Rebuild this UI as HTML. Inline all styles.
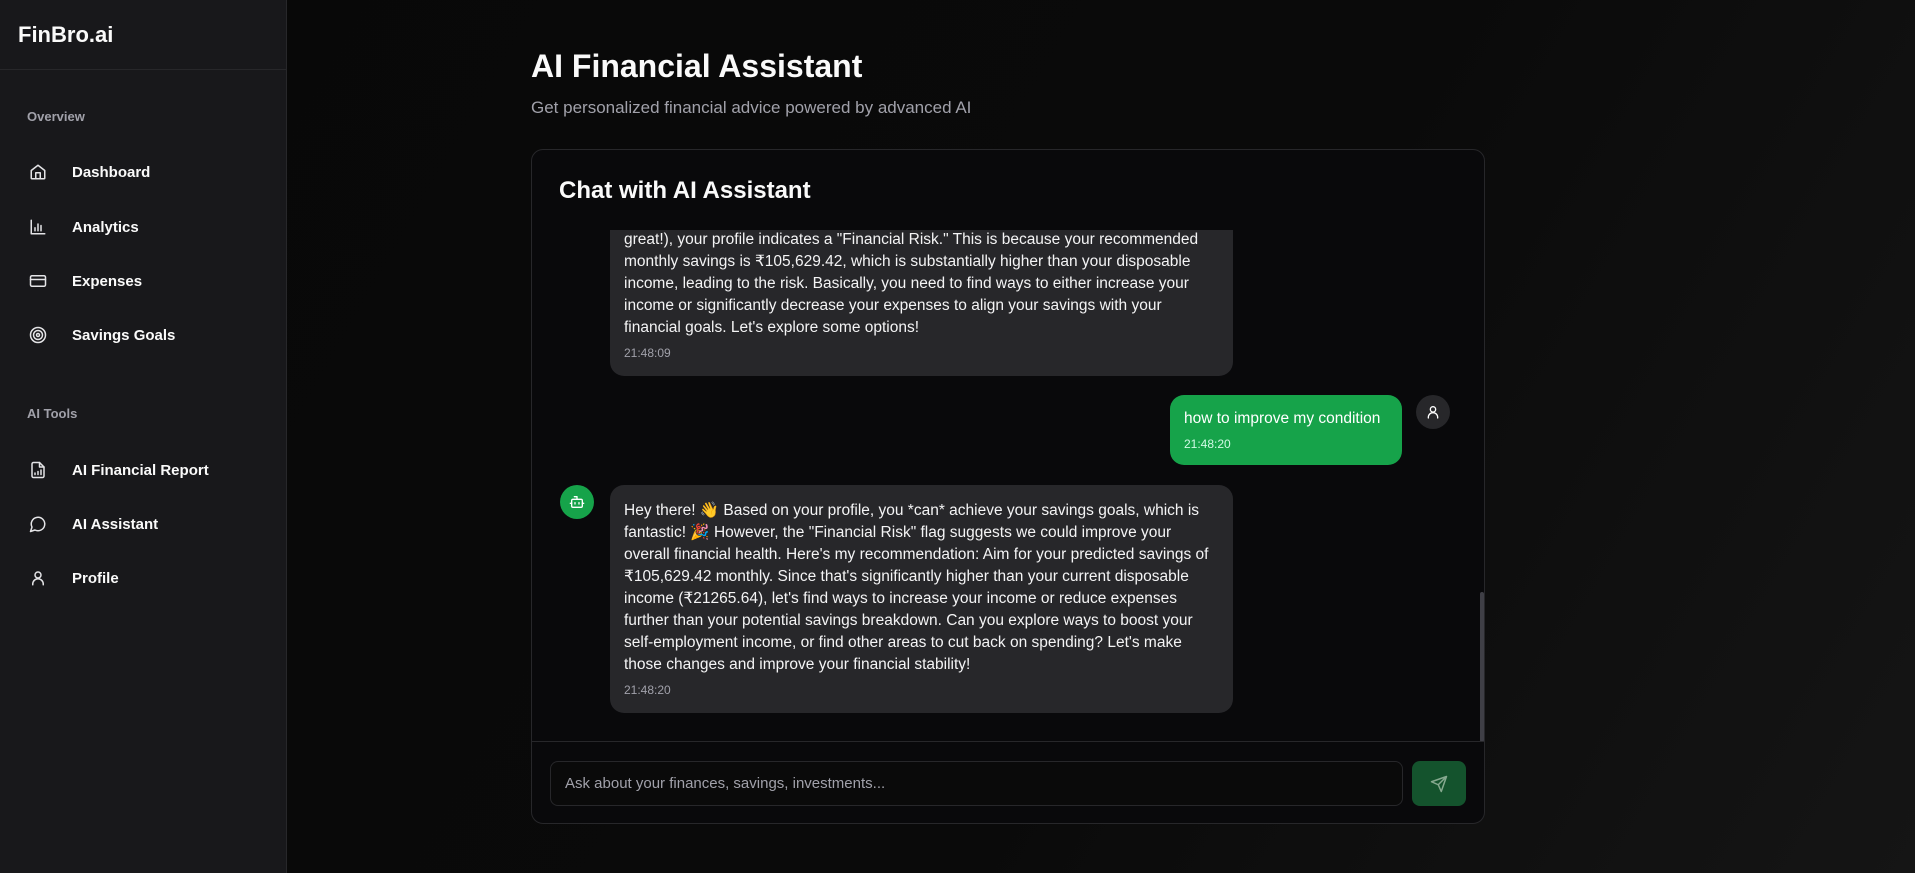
<!DOCTYPE html>
<html><head><meta charset="utf-8"><style>
*{box-sizing:border-box;margin:0;padding:0}
body{width:1915px;height:873px;overflow:hidden;background:linear-gradient(120deg,#080808 0%,#0a0a0a 60%,#151515 100%);font-family:"Liberation Sans","Noto Sans CJK SC",sans-serif;color:#fafafa;position:relative}
.sb{position:absolute;left:0;top:0;width:287px;height:873px;background:#18181b;border-right:1px solid #27272a}
.logo{height:70px;border-bottom:1px solid #27272a;padding:22px 0 0 18px;font-size:22px;font-weight:bold}
.sec{position:absolute;left:27px;font-size:13px;color:#a1a1aa;font-weight:bold}
.it{position:absolute;left:29px;display:flex;align-items:center;font-size:15px;font-weight:bold;color:#fafafa}
.it svg{width:18px;height:18px;margin-right:25px;stroke:#e4e4e7;fill:none;stroke-width:2;stroke-linecap:round;stroke-linejoin:round}
h1{position:absolute;left:531px;top:48px;font-size:32px;font-weight:bold}
.sub{position:absolute;left:531px;top:98px;font-size:17px;color:#a1a1aa}
.card{position:absolute;left:531px;top:149px;width:954px;height:675px;border:1px solid #27272a;border-radius:12px;background:#09090b}
.ct{position:absolute;left:27px;top:27px;font-size:24px;font-weight:bold}
.area{position:absolute;left:0;top:80px;width:952px;height:512px;overflow:hidden;border-bottom:1px solid #27272a}
.b{position:absolute;background:#27272a;border-radius:14px;padding:0 14px 15px;font-size:15.5px;line-height:22px;white-space:nowrap;color:#f4f4f5}
.ts{font-size:12px;color:#a1a1aa;margin-top:6px;line-height:16px}
.av{position:absolute;width:34px;height:34px;border-radius:50%;display:flex;align-items:center;justify-content:center}
.av svg{width:16px;height:16px;fill:none;stroke:#fff;stroke-width:2;stroke-linecap:round;stroke-linejoin:round}
.scroll{position:absolute;left:948px;top:362px;width:4px;height:150px;background:#3f3f46;border-radius:2px}
.inp{position:absolute;left:18px;top:611px;width:853px;height:45px;border:1px solid #27272a;border-radius:8px;padding:13px 14px;font-size:15px;color:#a1a1aa;background:#0a0a0a}
.send{position:absolute;left:880px;top:611px;width:54px;height:45px;border-radius:8px;background:#14532d;display:flex;align-items:center;justify-content:center}
</style></head><body>
<div class="sb">
<div class="logo">FinBro.ai</div>
<div class="sec" style="top:109px">Overview</div>
<div class="it" style="top:163px"><svg viewBox="0 0 24 24"><path d="M3 10l9-7 9 7v10a1 1 0 0 1-1 1H4a1 1 0 0 1-1-1z"/><path d="M9 21v-8h6v8"/></svg>Dashboard</div>
<div class="it" style="top:218px"><svg viewBox="0 0 24 24"><path d="M3 3v18h18M8 17v-4M12 17V8M16 17v-7"/></svg>Analytics</div>
<div class="it" style="top:272px"><svg viewBox="0 0 24 24"><rect x="2" y="5" width="20" height="14" rx="2"/><path d="M2 10h20"/></svg>Expenses</div>
<div class="it" style="top:326px"><svg viewBox="0 0 24 24"><circle cx="12" cy="12" r="10"/><circle cx="12" cy="12" r="6"/><circle cx="12" cy="12" r="2"/></svg>Savings Goals</div>
<div class="sec" style="top:406px">AI Tools</div>
<div class="it" style="top:461px"><svg viewBox="0 0 24 24"><path d="M14 2H6a2 2 0 0 0-2 2v16a2 2 0 0 0 2 2h12a2 2 0 0 0 2-2V8z"/><path d="M14 2v6h6M8 18v-2M12 18v-4M16 18v-6"/></svg>AI Financial Report</div>
<div class="it" style="top:515px"><svg viewBox="0 0 24 24"><path d="M7.9 20A9 9 0 1 0 4 16.1L2 22z"/></svg>AI Assistant</div>
<div class="it" style="top:569px"><svg viewBox="0 0 24 24"><circle cx="12" cy="8" r="4"/><path d="M5 21v-1a7 7 0 0 1 14 0v1"/></svg>Profile</div>
</div>
<h1>AI Financial Assistant</h1>
<div class="sub">Get personalized financial advice powered by advanced AI</div>
<div class="card">
<div class="ct">Chat with AI Assistant</div>
<div class="area">
<div class="b" style="left:78px;top:-40px;width:623px;padding-top:17px">still great!) your savings are on track<br>great!), your profile indicates a "Financial Risk." This is because your recommended<br>monthly savings is ₹105,629.42, which is substantially higher than your disposable<br>income, leading to the risk. Basically, you need to find ways to either increase your<br>income or significantly decrease your expenses to align your savings with your<br>financial goals. Let's explore some options!<div class="ts">21:48:09</div></div>
<div class="b" style="left:638px;top:165px;width:232px;height:70px;background:#16a34a;padding-top:13px;color:#fff">how to improve my condition<div class="ts" style="color:#d1fae5">21:48:20</div></div>
<div class="av" style="left:884px;top:165px;background:#27272a"><svg viewBox="0 0 24 24"><circle cx="12" cy="8" r="4"/><path d="M5 21v-1a7 7 0 0 1 14 0v1"/></svg></div>
<div class="av" style="left:28px;top:255px;background:#16a34a"><svg viewBox="0 0 24 24"><rect x="4" y="8" width="16" height="12" rx="2"/><path d="M12 8V4H8M2 14h2M20 14h2M9 13v2M15 13v2"/></svg></div>
<div class="b" style="left:78px;top:255px;width:623px;padding-top:15px">Hey there! 👋 Based on your profile, you *can* achieve your savings goals, which is<br>fantastic! 🎉 However, the "Financial Risk" flag suggests we could improve your<br>overall financial health. Here's my recommendation: Aim for your predicted savings of<br>₹105,629.42 monthly. Since that's significantly higher than your current disposable<br>income (₹21265.64), let's find ways to increase your income or reduce expenses<br>further than your potential savings breakdown. Can you explore ways to boost your<br>self-employment income, or find other areas to cut back on spending? Let's make<br>those changes and improve your financial stability!<div class="ts">21:48:20</div></div>
<div class="scroll"></div>
</div>
<div class="inp">Ask about your finances, savings, investments...</div>
<div class="send"><svg width="18" height="18" viewBox="0 0 24 24" fill="none" stroke="#86a98f" stroke-width="2" stroke-linecap="round" stroke-linejoin="round"><path d="M22 2L11 13M22 2l-7 20-4-9-9-4z"/></svg></div>
</div>
</body></html>
